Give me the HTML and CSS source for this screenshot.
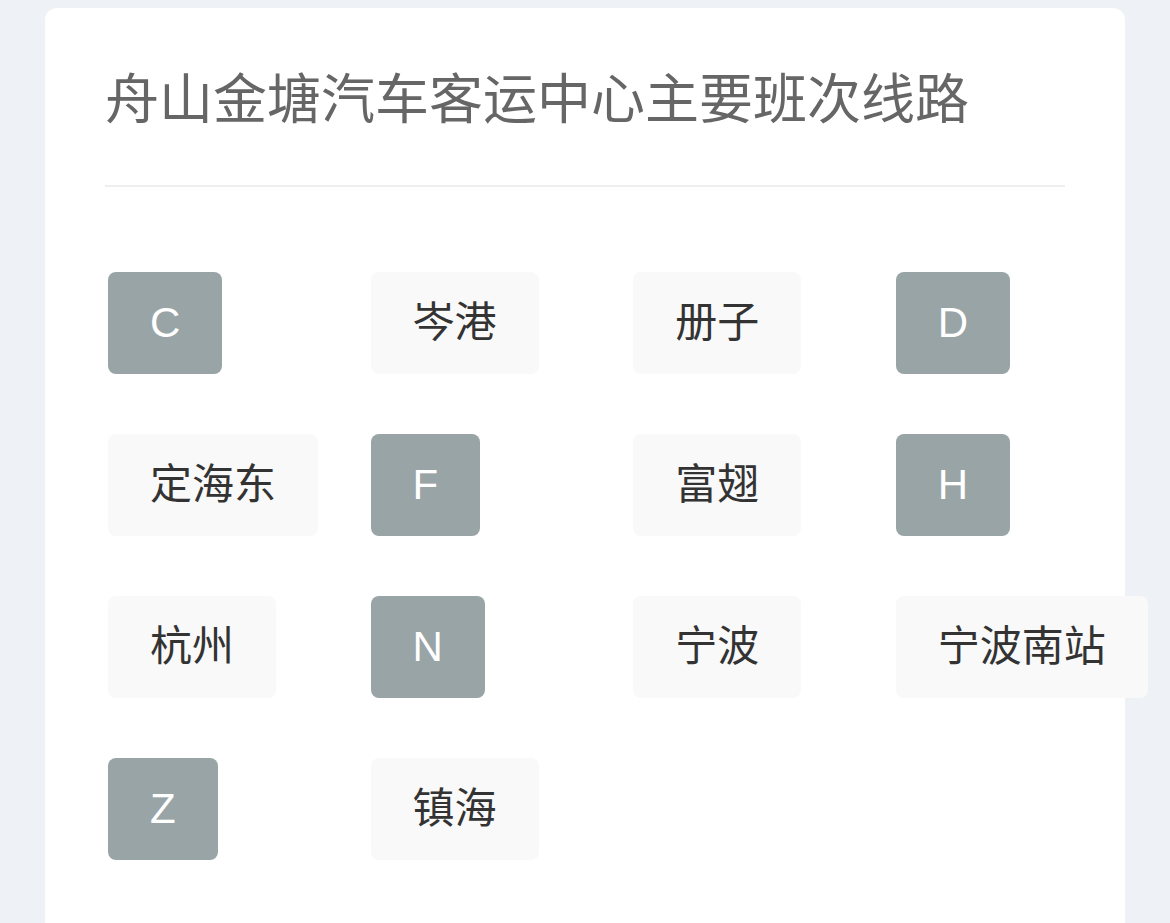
FILE: index.html
```html
<!DOCTYPE html>
<html lang="zh-CN">

<head>
  <meta charset="UTF-8" />
  <meta name="viewport" content="width=device-width, initial-scale=1.0" />
  <title>舟山金塘汽车客运中心主要班次线路</title>
  <link rel="stylesheet" href="styles.css">
</head>

<body>
  <div class="card">
    <h1 class="title">舟山金塘汽车客运中心主要班次线路</h1>
    <div class="divider"></div>

    <div class="routes">
      <div class="cell"><span class="route letter">C</span></div>
      <div class="cell"><span class="route">岑港</span></div>
      <div class="cell"><span class="route">册子</span></div>
      <div class="cell"><span class="route letter">D</span></div>

      <div class="cell"><span class="route">定海东</span></div>
      <div class="cell"><span class="route letter">F</span></div>
      <div class="cell"><span class="route">富翅</span></div>
      <div class="cell"><span class="route letter">H</span></div>

      <div class="cell"><span class="route">杭州</span></div>
      <div class="cell"><span class="route letter">N</span></div>
      <div class="cell"><span class="route">宁波</span></div>
      <div class="cell"><span class="route">宁波南站</span></div>

      <div class="cell"><span class="route letter">Z</span></div>
      <div class="cell"><span class="route">镇海</span></div>
    </div>
  </div>
</body>

</html>
```

FILE: styles.css
```css
body {
  margin: 0;
  background-color: #eef1f6;
  font-family: "Liberation Sans", "Noto Sans CJK SC", sans-serif;
  overflow: hidden;
}

.card {
  margin: 8px 45px 0 45px;
  padding: 56px 60px 80px 60px;
  background-color: #ffffff;
  border-radius: 12px;
  min-height: 1000px;
}

.title {
  margin: 0;
  font-size: 54px;
  font-weight: normal;
  line-height: 73px;
  color: #666666;
}

.divider {
  height: 2px;
  margin-top: 48px;
  background-color: #eeeeee;
}

.routes {
  display: grid;
  grid-template-columns: repeat(4, 262.6px);
  row-gap: 60px;
  margin-top: 85px;
  margin-left: 3px;
}

.cell {
  display: flex;
}

.route {
  display: inline-block;
  height: 102px;
  line-height: 102px;
  padding: 0 42px;
  font-size: 42px;
  color: #333333;
  background-color: #f9f9f9;
  border-radius: 8px;
  white-space: nowrap;
}

.letter {
  background-color: #99a4a7;
  color: #ffffff;
}
```
